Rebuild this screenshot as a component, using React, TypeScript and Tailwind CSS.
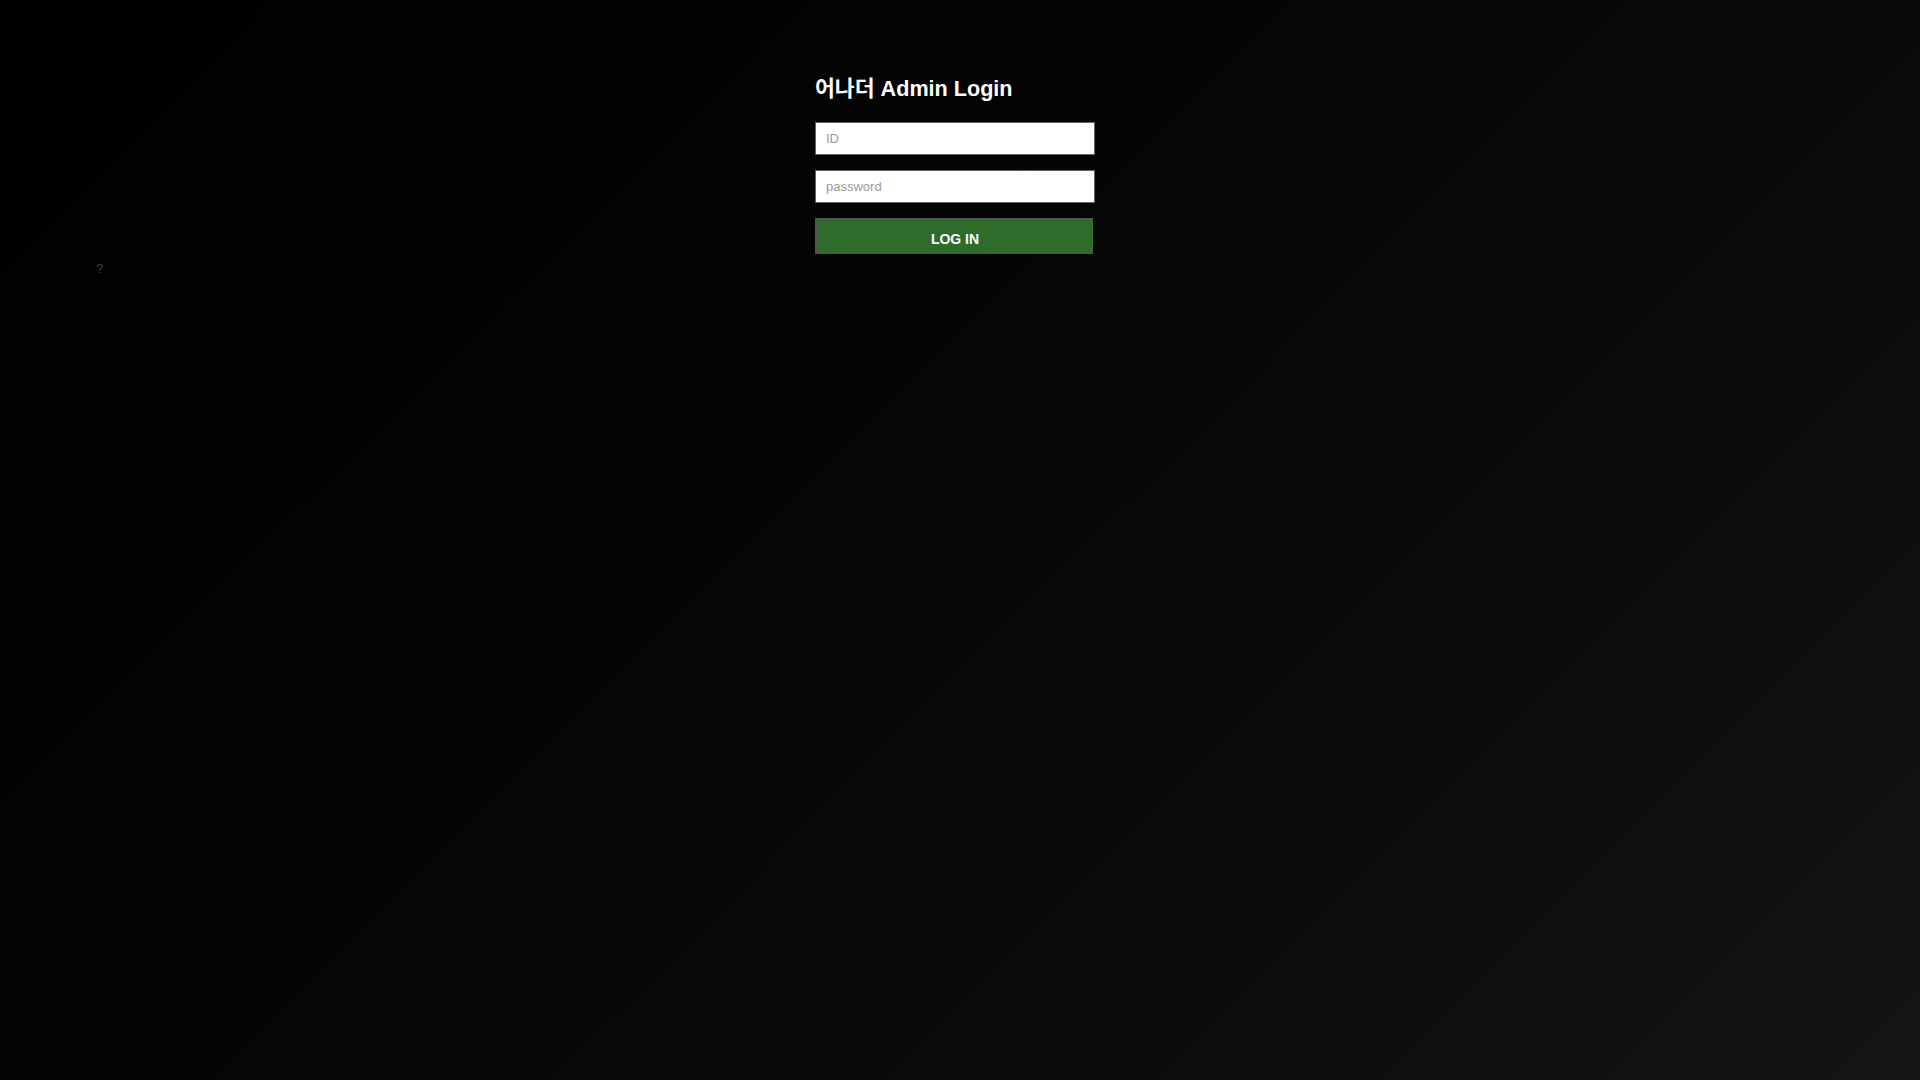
import React from "react";

export default function App() {
  return (
    <div
      className="relative w-full h-[1080px] overflow-hidden bg-[linear-gradient(135deg,#000000_0%,#050505_40%,#0b0b0b_70%,#141414_100%)]"
      style={{ fontFamily: '"Liberation Sans", Arial, "Noto Sans CJK KR", sans-serif' }}
    >
      <div className="flex flex-col w-[290px] mx-auto pt-[71px]">
        <h1 className="text-[21.6px] leading-[36px] font-bold text-white m-0">
          어나더 Admin Login
        </h1>
        <div className="flex flex-col gap-[15px] mt-[15px]">
          <input
            type="text"
            placeholder="ID"
            className="w-[280px] h-[33px] bg-white border border-[#6a5a68] px-[10px] text-[13px] text-black placeholder:text-[#9a9a9a] outline-none"
          />
          <input
            type="password"
            placeholder="password"
            className="w-[280px] h-[33px] bg-white border border-[#6a5a68] px-[10px] text-[13px] text-black placeholder:text-[#9a9a9a] outline-none"
          />
          <button
            type="button"
            className="w-[278px] h-[36px] bg-[#2f6b2a] border-t-2 border-l-2 border-[#555555] text-white text-[14px] font-bold pt-[4px]"
          >
            LOG IN
          </button>
        </div>
      </div>
      <div className="absolute left-[96px] top-[259px] text-[13px] text-[#444444]">?</div>
    </div>
  );
}
